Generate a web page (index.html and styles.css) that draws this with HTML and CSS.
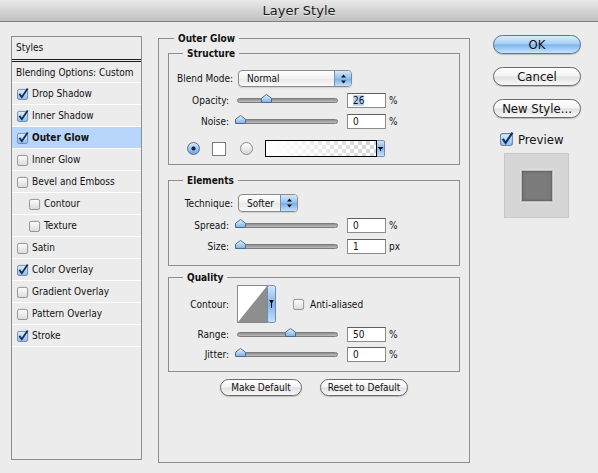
FILE: index.html
```html
<!DOCTYPE html>
<html lang="en">
<head>
    <meta charset="UTF-8">
    <meta name="viewport" content="width=device-width, initial-scale=1.0">
    <title>Layer Style</title>
    <link rel="stylesheet" href="styles.css">
</head>
<body>
    <svg class="defs" width="0" height="0" aria-hidden="true">
        <defs>
            <linearGradient id="boxOff" x1="0" y1="0" x2="0" y2="1">
                <stop offset="0" stop-color="#ffffff"/>
                <stop offset="1" stop-color="#d9d9d9"/>
            </linearGradient>
            <linearGradient id="boxOn" x1="0" y1="0" x2="0" y2="1">
                <stop offset="0" stop-color="#e2effc"/>
                <stop offset="1" stop-color="#8dbbe8"/>
            </linearGradient>
            <linearGradient id="thumbFill" x1="0" y1="0" x2="0" y2="1">
                <stop offset="0" stop-color="#eaf4fd"/>
                <stop offset="1" stop-color="#7db1e4"/>
            </linearGradient>
            <linearGradient id="btnBlue" x1="0" y1="0" x2="0" y2="1">
                <stop offset="0" stop-color="#d4e8fb"/>
                <stop offset="0.5" stop-color="#7fb5ea"/>
                <stop offset="1" stop-color="#c6e2fb"/>
            </linearGradient>
            <symbol id="cb-off" viewBox="0 0 13 13">
                <rect x="0.5" y="1.5" width="11" height="11" rx="2" fill="url(#boxOff)" stroke="#8a8a8a"/>
            </symbol>
            <symbol id="cb-on" viewBox="0 0 13 13">
                <rect x="0.5" y="1.5" width="11" height="11" rx="2" fill="url(#boxOn)" stroke="#6f86a6"/>
                <path d="M2.6 6.4 L5.2 10 L11.6 0.6" fill="none" stroke="#132f66" stroke-width="2"/>
            </symbol>
            <symbol id="thumb" viewBox="0 0 11 9">
                <path d="M5.5 0.5 L10.5 4.2 V8.5 H0.5 V4.2 Z" fill="url(#thumbFill)" stroke="#4b6d95"/>
            </symbol>
            <symbol id="updown" viewBox="0 0 7 10">
                <path d="M3.5 0.5 L6 3.6 H1 Z M3.5 9.5 L6 6.4 H1 Z" fill="#111"/>
            </symbol>
        </defs>
    </svg>

    <div class="titlebar">Layer Style</div>

    <div class="dialog">
        <div class="styles-list">
            <div class="list-head">Styles</div>
            <div class="list-item blend">Blending Options: Custom</div>
            <div class="list-item"><svg class="cb"><use href="#cb-on"/></svg>Drop Shadow</div>
            <div class="list-item"><svg class="cb"><use href="#cb-on"/></svg>Inner Shadow</div>
            <div class="list-item active"><svg class="cb"><use href="#cb-on"/></svg>Outer Glow</div>
            <div class="list-item"><svg class="cb"><use href="#cb-off"/></svg>Inner Glow</div>
            <div class="list-item"><svg class="cb"><use href="#cb-off"/></svg>Bevel and Emboss</div>
            <div class="list-item sub"><svg class="cb"><use href="#cb-off"/></svg>Contour</div>
            <div class="list-item sub"><svg class="cb"><use href="#cb-off"/></svg>Texture</div>
            <div class="list-item"><svg class="cb"><use href="#cb-off"/></svg>Satin</div>
            <div class="list-item"><svg class="cb"><use href="#cb-on"/></svg>Color Overlay</div>
            <div class="list-item"><svg class="cb"><use href="#cb-off"/></svg>Gradient Overlay</div>
            <div class="list-item"><svg class="cb"><use href="#cb-off"/></svg>Pattern Overlay</div>
            <div class="list-item"><svg class="cb"><use href="#cb-on"/></svg>Stroke</div>
        </div>

        <div class="outer">
            <div class="group-title">Outer Glow</div>

            <div class="group structure">
                <div class="group-title">Structure</div>
                <div class="row select-row">
                    <span class="label wide">Blend Mode:</span>
                    <div class="popup blend-popup">
                        <span class="popup-text">Normal</span>
                        <span class="popup-arrows"><svg width="7" height="10"><use href="#updown"/></svg></span>
                    </div>
                </div>
                <div class="row slider-row">
                    <span class="label">Opacity:</span>
                    <div class="track"><svg class="thumb" style="left: calc(26% - 3px)"><use href="#thumb"/></svg></div>
                    <span class="field"><span class="sel">26</span></span>
                    <span class="unit">%</span>
                </div>
                <div class="row slider-row">
                    <span class="label">Noise:</span>
                    <div class="track"><svg class="thumb" style="left: calc(0% - 3px)"><use href="#thumb"/></svg></div>
                    <span class="field">0</span>
                    <span class="unit">%</span>
                </div>
                <div class="row color-row">
                    <span class="radio on"></span>
                    <span class="swatch"></span>
                    <span class="radio"></span>
                    <div class="gradient">
                        <span class="grad-fill"></span>
                        <span class="grad-arrow"></span>
                    </div>
                </div>
            </div>

            <div class="group elements">
                <div class="group-title">Elements</div>
                <div class="row select-row tall">
                    <span class="label wide">Technique:</span>
                    <div class="popup tech-popup">
                        <span class="popup-text">Softer</span>
                        <span class="popup-arrows"><svg width="7" height="10"><use href="#updown"/></svg></span>
                    </div>
                </div>
                <div class="row slider-row">
                    <span class="label">Spread:</span>
                    <div class="track"><svg class="thumb" style="left: calc(0% - 3px)"><use href="#thumb"/></svg></div>
                    <span class="field">0</span>
                    <span class="unit">%</span>
                </div>
                <div class="row slider-row">
                    <span class="label">Size:</span>
                    <div class="track"><svg class="thumb" style="left: calc(0% - 3px)"><use href="#thumb"/></svg></div>
                    <span class="field">1</span>
                    <span class="unit">px</span>
                </div>
            </div>

            <div class="group quality">
                <div class="group-title">Quality</div>
                <div class="row contour-row">
                    <span class="label">Contour:</span>
                    <svg class="contour" width="39" height="38" viewBox="0 0 39 38">
                        <rect x="0.5" y="0.5" width="30" height="37" fill="#fff" stroke="#8a8a8a"/>
                        <path d="M1 37 L30 1 V37 Z" fill="#8e8e8e"/>
                        <rect x="30.5" y="0.5" width="8" height="37" rx="2" fill="url(#btnBlue)" stroke="#6f8db2"/>
                        <path d="M32.2 15 H36.8 L34.5 19 Z M34 18 H35 V23 H34 Z" fill="#000"/>
                    </svg>
                    <svg class="cb aa"><use href="#cb-off"/></svg>
                    <span class="aa-text">Anti-aliased</span>
                </div>
                <div class="row slider-row short">
                    <span class="label">Range:</span>
                    <div class="track"><svg class="thumb" style="left: calc(50% - 3px)"><use href="#thumb"/></svg></div>
                    <span class="field">50</span>
                    <span class="unit">%</span>
                </div>
                <div class="row slider-row short">
                    <span class="label">Jitter:</span>
                    <div class="track"><svg class="thumb" style="left: calc(0% - 3px)"><use href="#thumb"/></svg></div>
                    <span class="field">0</span>
                    <span class="unit">%</span>
                </div>
            </div>

            <div class="defaults">
                <button class="pill small make">Make Default</button>
                <button class="pill small reset">Reset to Default</button>
            </div>
        </div>

        <div class="actions">
            <button class="pill primary">OK</button>
            <button class="pill">Cancel</button>
            <button class="pill">New Style...</button>
            <label class="preview-check"><svg class="cb big"><use href="#cb-on"/></svg>Preview</label>
            <div class="preview-box"><div class="preview-swatch"></div></div>
        </div>
    </div>
</body>
</html>
```

FILE: styles.css
```css
body {
    margin: 0;
    width: 598px;
    height: 473px;
    overflow: hidden;
    background-color: #ececec;
    font-family: "DejaVu Sans Condensed", "Liberation Sans", sans-serif;
    font-size: 10px;
    color: #111;
}
.defs {
    position: absolute;
    width: 0;
    height: 0;
}
.titlebar {
    height: 21px;
    line-height: 22px;
    border-bottom: 1px solid #7e7e7e;
    background: linear-gradient(#e9e9e9, #c0c0c0);
    text-align: center;
    font-family: "DejaVu Sans", sans-serif;
    font-size: 13px;
    color: #1a1a1a;
    text-shadow: 0 1px 0 rgba(255, 255, 255, 0.5);
}
.dialog {
    display: flex;
    align-items: flex-start;
    padding-left: 11px;
}

/* styles list */
.styles-list {
    width: 131px;
    height: 424px;
    box-sizing: border-box;
    margin-top: 14px;
    border: 1px solid #8c8c8c;
    background-color: #ececec;
}
.list-head {
    height: 22px;
    line-height: 22px;
    padding-left: 4px;
    border-bottom: 3px double #1a1a1a;
}
.list-item {
    height: 21px;
    display: flex;
    align-items: center;
    gap: 3px;
    padding-left: 5px;
    border-bottom: 1px solid #fff;
}
.list-item.blend {
    height: 20px;
    padding-left: 4px;
}
.list-item.sub {
    padding-left: 17px;
}
.list-item.active {
    background-color: #b8d6fb;
    font-weight: bold;
}
.cb {
    width: 12px;
    height: 12px;
    flex: none;
    overflow: visible;
}
.cb.big {
    width: 14px;
    height: 14px;
}

/* group boxes */
.outer {
    width: 312px;
    height: 425px;
    box-sizing: border-box;
    margin: 16px 0 0 16px;
    padding: 0 9px;
    border: 1px solid #8e8e8e;
}
.group {
    border: 1px solid #8e8e8e;
}
.group-title {
    display: table;
    margin: -7px 0 0 6px;
    padding: 0 4px;
    line-height: 13px;
    background-color: #ececec;
    font-weight: bold;
}
.group .group-title {
    margin-left: 14px;
}
.structure {
    margin-top: 8px;
    padding-bottom: 7px;
}
.elements {
    margin-top: 15px;
    padding-bottom: 8px;
}
.quality {
    margin-top: 11px;
    padding-bottom: 7px;
}

/* rows */
.row {
    display: flex;
    align-items: center;
}
.label {
    width: 60px;
    margin-right: 8px;
    text-align: right;
    flex: none;
}
.label.wide {
    width: 64px;
    margin-right: 5px;
}
.select-row {
    height: 17px;
    margin-top: 10px;
}
.select-row.tall {
    height: 18px;
    margin-top: 7px;
}
.slider-row {
    height: 21px;
}
.select-row + .slider-row {
    margin-top: 3px;
}
.slider-row.short {
    height: 20px;
}
.color-row {
    height: 17px;
    margin-top: 8px;
}
.contour-row {
    height: 38px;
    margin-top: 1px;
    margin-bottom: 1px;
}

/* popup menu */
.popup {
    display: flex;
    height: 100%;
    box-sizing: border-box;
    border: 1px solid #8a8a8a;
    border-radius: 4px;
    overflow: hidden;
    background: linear-gradient(#fefefe, #f2f2f2 50%, #e7e7e7 51%, #fbfbfb);
    box-shadow: 0 1px 1px rgba(0, 0, 0, 0.12);
}
.blend-popup {
    width: 114px;
}
.tech-popup {
    width: 60px;
}
.popup-text {
    flex: 1;
    display: flex;
    align-items: center;
    padding-left: 8px;
}
.popup-arrows {
    width: 16px;
    display: flex;
    align-items: center;
    justify-content: center;
    border-left: 1px solid #7790ae;
    background: linear-gradient(#d4e8fb, #8fc0ee 50%, #74ade6 51%, #c4e1fb);
}

/* slider */
.track {
    position: relative;
    width: 101px;
    height: 5px;
    box-sizing: border-box;
    flex: none;
    border: 1px solid #7c7c7c;
    border-radius: 3px;
    background: linear-gradient(#8e8e8e, #bdbdbd);
}
.thumb {
    position: absolute;
    top: -5px;
    width: 11px;
    height: 9px;
}
.field {
    width: 39px;
    height: 15px;
    box-sizing: border-box;
    margin-left: 9px;
    padding-left: 5px;
    border: 1px solid #8b8b8b;
    border-top-color: #5f5f5f;
    background-color: #fff;
    line-height: 13px;
    flex: none;
}
.sel {
    background-color: #b5d4f8;
}
.unit {
    margin-left: 3px;
}

/* color row */
.radio {
    width: 13px;
    height: 13px;
    box-sizing: border-box;
    border: 1px solid #8a8a8a;
    border-radius: 50%;
    background: linear-gradient(#fdfdfd, #d8d8d8);
    flex: none;
}
.radio.on {
    margin-left: 18px;
    border-color: #4f719b;
    background: radial-gradient(circle, #15233d 0 1.7px, transparent 2.4px), linear-gradient(#d6e9fb, #6ea5dd);
}
.swatch {
    width: 14px;
    height: 14px;
    box-sizing: border-box;
    margin-left: 12px;
    border: 1px solid #7c7c7c;
    background-color: #fff;
}
.swatch + .radio {
    margin-left: 14px;
}
.gradient {
    display: flex;
    height: 17px;
    margin-left: 12px;
}
.grad-fill {
    width: 112px;
    box-sizing: border-box;
    border: 1px solid #000;
    background:
        linear-gradient(to right, #fff 4%, rgba(255, 255, 255, 0) 92%),
        conic-gradient(#d6d6d6 25%, #fff 0 50%, #d6d6d6 0 75%, #fff 0) 0 0 / 8px 8px;
}
.grad-arrow {
    width: 8px;
    box-sizing: border-box;
    border: 1px solid #6f8db2;
    border-left: none;
    border-radius: 0 2px 2px 0;
    background:
        linear-gradient(#000, #000) no-repeat center 7px / 3px 1px,
        linear-gradient(#000, #000) no-repeat center 8px / 1px 2px,
        linear-gradient(#000, #000) no-repeat center 6px / 5px 1px,
        linear-gradient(#cfe5fb, #7fb5ea 50%, #c3e1fb);
}

/* contour */
.contour {
    flex: none;
}
.cb.aa {
    margin-left: 17px;
}
.aa-text {
    margin-left: 5px;
}

/* buttons */
.pill {
    display: block;
    width: 88px;
    height: 19px;
    padding: 0;
    border: 1px solid #6a6a6a;
    border-radius: 10px;
    background: linear-gradient(#ffffff, #f4f4f4 45%, #e2e2e2 52%, #f8f8f8);
    box-shadow: 0 1px 1px rgba(0, 0, 0, 0.2);
    font-family: inherit;
    font-size: 13px;
    color: #111;
    margin-bottom: 13px;
}
.pill.primary {
    border-color: #56769f;
    background: linear-gradient(#dcedfc, #a9d0f4 45%, #7db6ec 52%, #c8e5fc);
}
.pill.small {
    height: 17px;
    font-size: 10px;
    margin-bottom: 0;
}
.pill.make {
    width: 82px;
}
.pill.reset {
    width: 88px;
}
.defaults {
    display: flex;
    justify-content: center;
    gap: 18px;
    margin-top: 7px;
}
.actions {
    display: flex;
    flex-direction: column;
    width: 88px;
    margin: 13px 0 0 23px;
}
.preview-check {
    display: flex;
    align-items: center;
    gap: 4px;
    height: 16px;
    padding-left: 7px;
    font-size: 13px;
}
.preview-box {
    width: 65px;
    height: 65px;
    box-sizing: border-box;
    margin: 6px 0 0 11px;
    display: flex;
    align-items: center;
    justify-content: center;
    border: 1px solid #c8c8c8;
    background-color: #d6d6d6;
}
.preview-swatch {
    width: 32px;
    height: 32px;
    box-sizing: border-box;
    border: 1px solid #bdbdbd;
    background-color: #7b7b7b;
    box-shadow: 0 0 2px #f2f2f2, inset 0 0 3px #4a4a4a;
}
```
